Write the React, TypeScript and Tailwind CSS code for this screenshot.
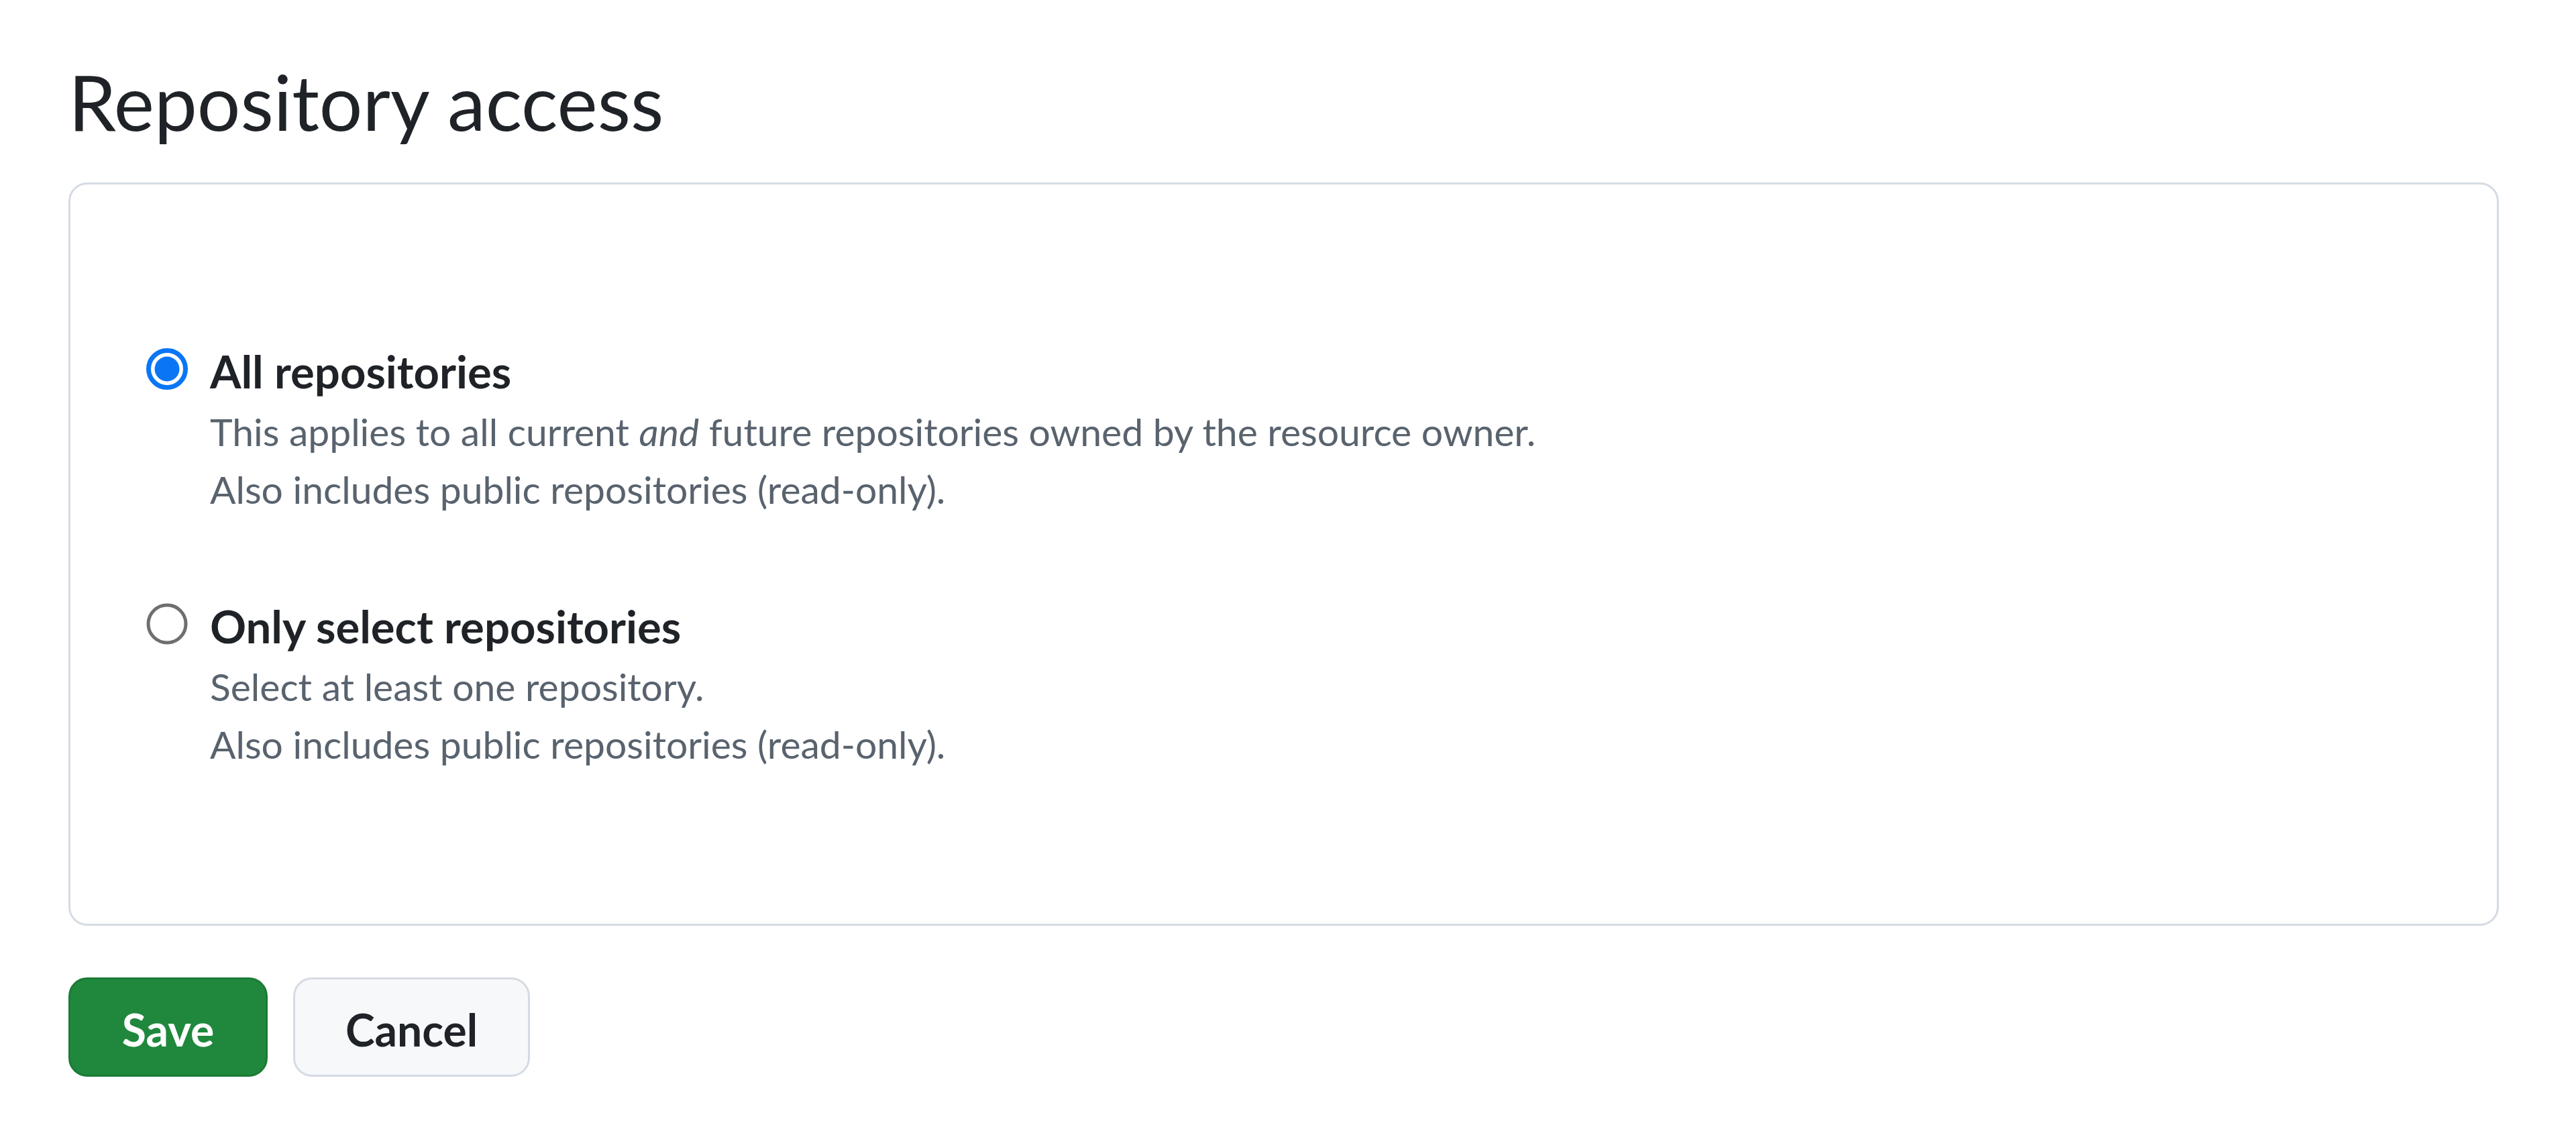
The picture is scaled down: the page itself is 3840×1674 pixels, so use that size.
import { useState } from 'react';

type Option = {
  id: string;
  label: string;
  lines: React.ReactNode[];
};

const options: Option[] = [
  {
    id: 'all',
    label: 'All repositories',
    lines: [
      <>
        This applies to all current <em>and</em> future repositories owned by the resource owner.
      </>,
      'Also includes public repositories (read-only).',
    ],
  },
  {
    id: 'selected',
    label: 'Only select repositories',
    lines: ['Select at least one repository.', 'Also includes public repositories (read-only).'],
  },
];

function RadioDot({ checked }: { checked: boolean }) {
  if (checked) {
    return (
      <svg width="64" height="64" viewBox="0 0 64 64" className="shrink-0">
        <circle cx="32" cy="32" r="27.5" fill="white" stroke="#0b76f5" strokeWidth="7" />
        <circle cx="32" cy="32" r="18.5" fill="#0b76f5" />
      </svg>
    );
  }
  return (
    <svg width="64" height="64" viewBox="0 0 64 64" className="shrink-0">
      <circle cx="32" cy="32" r="28" fill="white" stroke="#6f6f6f" strokeWidth="5" />
    </svg>
  );
}

export default function App() {
  const [selected, setSelected] = useState('all');

  return (
    <div className="min-h-[1674px] bg-white font-['Lato','Noto_Sans',sans-serif] text-[#1f2328]">
      <div className="pl-[102px] pt-[79px]">
        <h2 className="text-[114px] leading-[144px] font-normal">Repository access</h2>

        <div className="mt-[49px] w-[3623px] h-[1108px] rounded-[28px] border-[3px] border-[#d5dbe3] pt-[235px] pl-[112px]">
          <div className="flex flex-col gap-[118px]">
            {options.map((opt) => (
              <label
                key={opt.id}
                className="flex items-start gap-[32px] cursor-pointer"
                onClick={() => setSelected(opt.id)}
              >
                <div className="mt-[8px]">
                  <RadioDot checked={selected === opt.id} />
                </div>
                <div className="flex flex-col">
                  <span className="text-[67px] leading-[86px] font-bold">{opt.label}</span>
                  <div className="mt-[4px] text-[57px] leading-[86px] text-[#59636e]">
                    {opt.lines.map((line, i) => (
                      <p key={i}>{line}</p>
                    ))}
                  </div>
                </div>
              </label>
            ))}
          </div>
        </div>

        <div className="mt-[77px] flex gap-[38px]">
          <button className="h-[148px] w-[297px] rounded-[28px] border-[3px] border-[#1c7a37] bg-[#1f883d] pt-[6px] text-[66px] font-bold text-white">
            Save
          </button>
          <button className="h-[148px] w-[353px] rounded-[28px] border-[3px] border-[#d5dbe3] bg-[#f6f8fa] pt-[6px] text-[66px] font-bold text-[#1f2328]">
            Cancel
          </button>
        </div>
      </div>
    </div>
  );
}
